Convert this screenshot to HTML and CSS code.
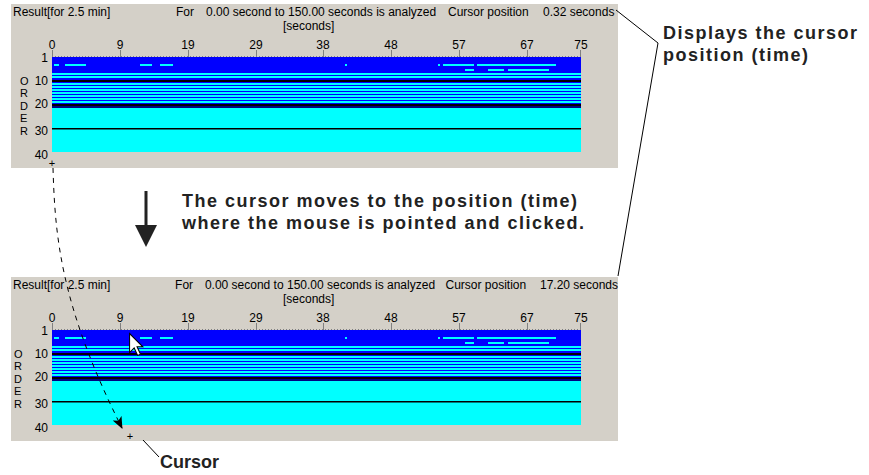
FILE: index.html
```html
<!DOCTYPE html>
<html lang="en">
<head>
    <meta charset="UTF-8">
    <title>Cursor position</title>
    <link rel="stylesheet" href="styles.css">
</head>
<body>
<div class="page">
    <div class="main">
        <!-- before the click -->
        <section class="panel">
            <div class="panel-head">
                <div class="head-row">
                    <span class="title">Result[for 2.5 min]</span>
                    <span class="for">For</span>
                    <span class="range">0.00 second to 150.00 seconds is analyzed</span>
                    <span class="cur-label">Cursor position</span>
                    <span>0.32 seconds</span>
                </div>
                <div class="units">[seconds]</div>
            </div>
            <svg class="chart" width="607" height="136" viewBox="0 0 607 136">
                <g class="tick">
                    <line x1="41.5" y1="18" x2="41.5" y2="25"/>
                    <line x1="109.5" y1="18" x2="109.5" y2="25"/>
                    <line x1="177.5" y1="18" x2="177.5" y2="25"/>
                    <line x1="245.5" y1="18" x2="245.5" y2="25"/>
                    <line x1="312.5" y1="18" x2="312.5" y2="25"/>
                    <line x1="380.5" y1="18" x2="380.5" y2="25"/>
                    <line x1="448.5" y1="18" x2="448.5" y2="25"/>
                    <line x1="516.5" y1="18" x2="516.5" y2="25"/>
                    <line x1="569.5" y1="18" x2="569.5" y2="25"/>
                    <line class="ruler" x1="41" y1="24.5" x2="570" y2="24.5"/>
                </g>
                <g class="xlab">
                    <text x="41" y="17">0</text>
                    <text x="109" y="17">9</text>
                    <text x="177" y="17">19</text>
                    <text x="245" y="17">29</text>
                    <text x="312" y="17">38</text>
                    <text x="380" y="17">48</text>
                    <text x="448" y="17">57</text>
                    <text x="516" y="17">67</text>
                    <text x="570" y="17">75</text>
                </g>
                <g class="ylab">
                    <text x="37" y="30">1</text>
                    <text x="37" y="53">10</text>
                    <text x="37" y="76">20</text>
                    <text x="37" y="103">30</text>
                    <text x="37" y="127">40</text>
                </g>
                <g class="order">
                    <text x="9" y="53">O</text>
                    <text x="9" y="65">R</text>
                    <text x="9" y="78">D</text>
                    <text x="9" y="90">E</text>
                    <text x="9" y="103">R</text>
                </g>
                <rect class="blue" x="41" y="25" width="529" height="51"/>
                <rect class="cyan" x="41" y="76" width="529" height="44"/>
                <g class="cyan">
                    <rect x="43" y="32" width="5" height="2"/>
                    <rect x="54" y="32" width="21" height="2"/>
                    <rect x="129" y="32" width="12" height="2"/>
                    <rect x="149" y="32" width="13" height="2"/>
                    <rect x="334" y="32" width="2" height="2"/>
                    <rect x="427" y="32" width="2" height="2"/>
                    <rect x="432" y="32" width="31" height="2"/>
                    <rect x="466" y="32" width="79" height="2"/>
                    <rect x="454" y="37" width="9" height="2"/>
                    <rect x="477" y="37" width="16" height="2"/>
                    <rect x="497" y="37" width="41" height="2"/>
                    <rect x="41" y="41" width="529" height="2"/>
                    <rect x="41" y="44" width="529" height="2"/>
                    <rect x="41" y="51" width="529" height="2"/>
                    <rect x="41" y="54" width="529" height="2"/>
                    <rect x="41" y="57" width="529" height="2"/>
                    <rect x="41" y="60" width="529" height="2"/>
                    <rect x="41" y="63" width="529" height="2"/>
                    <rect x="41" y="66" width="529" height="2"/>
                    <rect x="41" y="69" width="529" height="2"/>
                </g>
                <rect class="black" x="41" y="48" width="529" height="2"/>
                <rect class="black" x="41" y="72" width="529" height="2"/>
                <rect class="navy" x="41" y="74" width="529" height="2"/>
                <rect class="black" x="41" y="96" width="529" height="1.5"/>
                <text class="plus" x="41" y="135">+</text>
            </svg>
        </section>

        <div class="note">
            <svg class="down" width="22" height="56" viewBox="0 0 22 56">
                <rect x="9.5" y="0" width="3" height="36"/>
                <polygon points="0,34 22,34 11,56"/>
            </svg>
            <p>The cursor moves to the position (time)<br>where the mouse is pointed and clicked.</p>
        </div>

        <!-- after the click -->
        <section class="panel">
            <div class="panel-head">
                <div class="head-row">
                    <span class="title">Result[for 2.5 min]</span>
                    <span class="for">For</span>
                    <span class="range">0.00 second to 150.00 seconds is analyzed</span>
                    <span class="cur-label">Cursor position</span>
                    <span>17.20 seconds</span>
                </div>
                <div class="units">[seconds]</div>
            </div>
            <svg class="chart" width="607" height="136" viewBox="0 0 607 136">
                <g class="tick">
                    <line x1="41.5" y1="18" x2="41.5" y2="25"/>
                    <line x1="109.5" y1="18" x2="109.5" y2="25"/>
                    <line x1="177.5" y1="18" x2="177.5" y2="25"/>
                    <line x1="245.5" y1="18" x2="245.5" y2="25"/>
                    <line x1="312.5" y1="18" x2="312.5" y2="25"/>
                    <line x1="380.5" y1="18" x2="380.5" y2="25"/>
                    <line x1="448.5" y1="18" x2="448.5" y2="25"/>
                    <line x1="516.5" y1="18" x2="516.5" y2="25"/>
                    <line x1="569.5" y1="18" x2="569.5" y2="25"/>
                    <line class="ruler" x1="41" y1="24.5" x2="570" y2="24.5"/>
                </g>
                <g class="xlab">
                    <text x="41" y="17">0</text>
                    <text x="109" y="17">9</text>
                    <text x="177" y="17">19</text>
                    <text x="245" y="17">29</text>
                    <text x="312" y="17">38</text>
                    <text x="380" y="17">48</text>
                    <text x="448" y="17">57</text>
                    <text x="516" y="17">67</text>
                    <text x="570" y="17">75</text>
                </g>
                <g class="ylab">
                    <text x="37" y="30">1</text>
                    <text x="37" y="53">10</text>
                    <text x="37" y="76">20</text>
                    <text x="37" y="103">30</text>
                    <text x="37" y="127">40</text>
                </g>
                <g class="order">
                    <text x="3" y="53">O</text>
                    <text x="3" y="65">R</text>
                    <text x="3" y="78">D</text>
                    <text x="3" y="90">E</text>
                    <text x="3" y="103">R</text>
                </g>
                <rect class="blue" x="41" y="25" width="529" height="51"/>
                <rect class="cyan" x="41" y="76" width="529" height="44"/>
                <g class="cyan">
                    <rect x="43" y="32" width="5" height="2"/>
                    <rect x="54" y="32" width="21" height="2"/>
                    <rect x="129" y="32" width="12" height="2"/>
                    <rect x="149" y="32" width="13" height="2"/>
                    <rect x="334" y="32" width="2" height="2"/>
                    <rect x="427" y="32" width="2" height="2"/>
                    <rect x="432" y="32" width="31" height="2"/>
                    <rect x="466" y="32" width="79" height="2"/>
                    <rect x="454" y="37" width="9" height="2"/>
                    <rect x="477" y="37" width="16" height="2"/>
                    <rect x="497" y="37" width="41" height="2"/>
                    <rect x="41" y="41" width="529" height="2"/>
                    <rect x="41" y="44" width="529" height="2"/>
                    <rect x="41" y="51" width="529" height="2"/>
                    <rect x="41" y="54" width="529" height="2"/>
                    <rect x="41" y="57" width="529" height="2"/>
                    <rect x="41" y="60" width="529" height="2"/>
                    <rect x="41" y="63" width="529" height="2"/>
                    <rect x="41" y="66" width="529" height="2"/>
                    <rect x="41" y="69" width="529" height="2"/>
                </g>
                <rect class="black" x="41" y="48" width="529" height="2"/>
                <rect class="black" x="41" y="72" width="529" height="2"/>
                <rect class="navy" x="41" y="74" width="529" height="2"/>
                <rect class="black" x="41" y="96" width="529" height="1.5"/>
                <text class="plus" x="119" y="135">+</text>
                <path class="pointer" transform="translate(118 28) scale(1.15)" d="M0.5,0.5 V17 L4.5,13 L7.5,19.5 L10,18.5 L7,12 H12 Z"/>
            </svg>
        </section>

        <p class="cursor-label">Cursor</p>
    </div>

    <aside class="callout">Displays the cursor<br>position (time)</aside>

    <!-- leader lines drawn over the figure -->
    <svg class="leaders" width="869" height="475" viewBox="0 0 869 475">
        <defs>
            <marker id="head" markerWidth="12" markerHeight="10" refX="11" refY="5" orient="auto" markerUnits="userSpaceOnUse">
                <polygon points="0,0 12,5 0,10 3,5"/>
            </marker>
        </defs>
        <polyline points="616,10 658,43 618,276"/>
        <path class="dashed" d="M53,168 C55,235 60,305 122,428" marker-end="url(#head)"/>
        <line x1="143" y1="440" x2="159" y2="457"/>
    </svg>
</div>
</body>
</html>
```

FILE: styles.css
```css
body {
    margin: 0;
    background-color: #fff;
    font-family: "Liberation Sans", Arial, sans-serif;
    color: #000;
}

.page {
    position: relative;
    width: 869px;
    height: 475px;
    display: flex;
    overflow: hidden;
}

.main {
    width: 607px;
    padding: 4px 0 0 11px;
}

.panel {
    background-color: #d4d0c8;
    height: 164px;
    font-size: 12px;
}

.panel-head {
    height: 28px;
    padding-top: 1px;
    box-sizing: border-box;
    line-height: 14px;
    white-space: nowrap;
}

.head-row {
    display: flex;
}

.title {
    width: 165px;
    padding-left: 2px;
    box-sizing: border-box;
}

.for {
    width: 30px;
}

.range {
    width: 242px;
}

.cur-label {
    width: 95px;
}

.units {
    padding-left: 272px;
}

.chart {
    display: block;
    font-family: "Liberation Sans", Arial, sans-serif;
    font-size: 12px;
}

.tick line {
    stroke: #808080;
    stroke-width: 1;
}

.tick .ruler {
    stroke-dasharray: 1 2;
}

.xlab text {
    text-anchor: middle;
}

.ylab text {
    text-anchor: end;
}

.order text {
    font-size: 11px;
}

.plus {
    text-anchor: middle;
    font-size: 11px;
}

.blue {
    fill: #0000ff;
}

.cyan {
    fill: #00ffff;
}

.black {
    fill: #000;
}

.navy {
    fill: #000080;
}

.pointer {
    fill: #fff;
    stroke: #000;
    stroke-width: 0.9;
}

.note {
    height: 109px;
    display: flex;
    align-items: flex-start;
}

.down {
    margin: 23px 0 0 124px;
    fill: #222;
}

.note p,
.callout,
.cursor-label {
    font-weight: bold;
    font-size: 18px;
    line-height: 22px;
    color: #222;
}

.note p {
    margin: 22px 0 0 25px;
    letter-spacing: 1.5px;
}

.callout {
    margin: 22px 0 0 45px;
    letter-spacing: 1.5px;
    white-space: nowrap;
}

.cursor-label {
    margin: 10px 0 0 149px;
}

.leaders {
    position: absolute;
    left: 0;
    top: 0;
    pointer-events: none;
    fill: none;
    stroke: #000;
    stroke-width: 1;
}

.leaders .dashed {
    stroke-dasharray: 5 5;
}

.leaders marker polygon {
    fill: #000;
    stroke: none;
}
```
